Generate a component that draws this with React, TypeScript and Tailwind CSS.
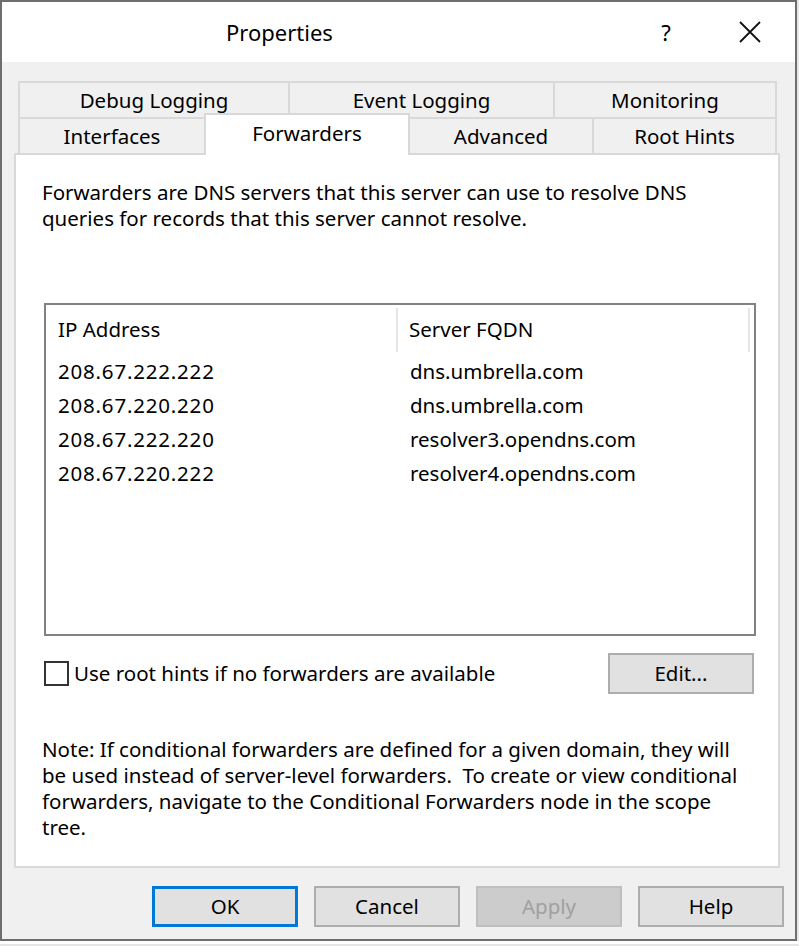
import React from 'react';

const font = { fontFamily: '"Noto Sans", "Open Sans", sans-serif' };

const rows = [
  { ip: '208.67.222.222', fqdn: 'dns.umbrella.com' },
  { ip: '208.67.220.220', fqdn: 'dns.umbrella.com' },
  { ip: '208.67.222.220', fqdn: 'resolver3.opendns.com' },
  { ip: '208.67.220.222', fqdn: 'resolver4.opendns.com' },
];

function Tab({ label, w }: { label: string; w: string }) {
  return (
    <div
      className={`${w} h-[36px] flex items-center justify-center border-t-2 border-l-2 border-[#d9d9d9] bg-[#f0f0f0] last:border-r-2`}
    >
      {label}
    </div>
  );
}

function Button({ label, kind }: { label: string; kind?: 'default' | 'disabled' }) {
  const cls =
    kind === 'default'
      ? 'border-[3px] border-[#0078d7] bg-[#e1e1e1] text-black'
      : kind === 'disabled'
        ? 'border-2 border-[#bfbfbf] bg-[#cccccc] text-[#a0a0a0]'
        : 'border-2 border-[#adadad] bg-[#e1e1e1] text-black';
  return (
    <div className={`w-[146px] h-[41px] flex items-center justify-center ${cls}`}>{label}</div>
  );
}

export default function App() {
  return (
    <div className="w-[799px] h-[946px] bg-[#e6e6e6] text-[20.5px] text-black overflow-hidden" style={font}>
      <div className="w-[797px] h-[941px] border-2 border-b-2 border-[#6e6e6e] flex flex-col">
        {/* Title bar */}
        <div className="h-[60px] bg-white flex items-center shrink-0">
          <div className="pl-[224px] text-[22px] flex-1">Properties</div>
          <div className="w-[40px] text-[22px] text-center mr-[52px]">?</div>
          <svg width="24" height="24" viewBox="0 0 24 24" className="mr-[33px]">
            <path d="M2 2 L22 22 M22 2 L2 22" stroke="#111" strokeWidth="1.8" fill="none" />
          </svg>
        </div>

        {/* Body */}
        <div className="flex-1 bg-[#f0f0f0] flex flex-col pl-[12px] pt-[19px]">
          {/* Tabs */}
          <div className="pl-[4px] flex flex-col">
            <div className="flex">
              <Tab label="Debug Logging" w="w-[270px]" />
              <Tab label="Event Logging" w="w-[265px]" />
              <Tab label="Monitoring" w="w-[224px]" />
            </div>
            <div className="flex items-start">
              <Tab label="Interfaces" w="w-[186px]" />
              <div className="relative z-10 w-[206px] h-[42px] -mt-[4px] -mb-[2px] flex items-start justify-center pt-[3px] bg-white border-t-2 border-l-2 border-r-2 border-[#d9d9d9]">
                Forwarders
              </div>
              <div className="w-[182px] h-[36px] flex items-center justify-center border-t-2 border-[#d9d9d9] bg-[#f0f0f0]">
                Advanced
              </div>
              <Tab label="Root Hints" w="w-[185px]" />
            </div>
          </div>

          {/* Panel */}
          <div className="w-[766px] h-[715px] bg-white border-2 border-[#d9d9d9] flex flex-col pl-[26px] pt-[24px]">
            <p className="leading-[26px]">
              Forwarders are DNS servers that this server can use to resolve DNS
              <br />
              queries for records that this server cannot resolve.
            </p>

            <div className="mt-[72px] ml-[2px] w-[712px] h-[333px] border-2 border-[#828282] flex flex-col">
              <div className="flex h-[49px] items-center">
                <div className="w-[352px] pl-[12px] h-[44px] flex items-center border-r-2 border-[#e5e5e5]">
                  IP Address
                </div>
                <div className="w-[352px] pl-[11px] h-[44px] flex items-center border-r-2 border-[#e5e5e5]">
                  Server FQDN
                </div>
              </div>
              <div className="flex flex-col">
                {rows.map((r, i) => (
                  <div key={i} className="flex h-[34px] items-center">
                    <div className="w-[354px] pl-[12px] tracking-[0.8px]">{r.ip}</div>
                    <div className="pl-[10px]">{r.fqdn}</div>
                  </div>
                ))}
              </div>
            </div>

            <div className="mt-[17px] ml-[2px] w-[710px] flex items-center justify-between">
              <div className="flex items-center">
                <div className="w-[25px] h-[25px] border-2 border-[#333333] bg-white" />
                <span className="ml-[5px]">Use root hints if no forwarders are available</span>
              </div>
              <div className="w-[146px] h-[41px] flex items-center justify-center border-2 border-[#adadad] bg-[#e1e1e1]">
                Edit...
              </div>
            </div>

            <p className="mt-[42px] leading-[26px]">
              Note: If conditional forwarders are defined for a given domain, they will
              <br />
              be used instead of server-level forwarders.&nbsp; To create or view conditional
              <br />
              forwarders, navigate to the Conditional Forwarders node in the scope
              <br />
              tree.
            </p>
          </div>

          {/* Buttons */}
          <div className="flex gap-[16px] pl-[138px] mt-[18px]">
            <Button label="OK" kind="default" />
            <Button label="Cancel" />
            <Button label="Apply" kind="disabled" />
            <Button label="Help" />
          </div>
        </div>
      </div>
      <div className="h-[3px] bg-white" />
    </div>
  );
}
